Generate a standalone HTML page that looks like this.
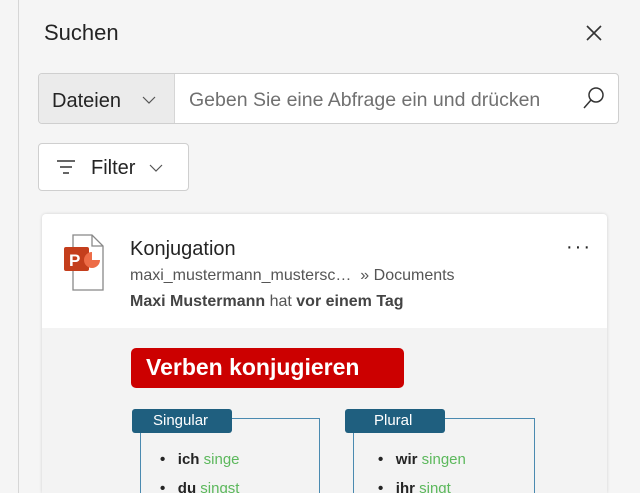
<!DOCTYPE html>
<html><head><style>
*{margin:0;padding:0;box-sizing:border-box}
html,body{width:640px;height:493px;overflow:hidden}
body{background:#f5f5f5;font-family:"Liberation Sans",sans-serif;position:relative;color:#242424}
.a{position:absolute}
</style></head><body>
<div class="a" style="left:18px;top:0;width:1px;height:493px;background:#d6d6d6"></div>
<div class="a" style="left:44px;top:20px;font-size:22px">Suchen</div>
<svg class="a" style="left:585px;top:24px" width="18" height="18"><path d="M2 2L16 16M16 2L2 16" stroke="#333" stroke-width="1.6"/></svg>
<div class="a" style="left:38px;top:73px;width:581px;height:51px;border:1px solid #cfcfcf;border-radius:4px;background:#fff;overflow:hidden">
 <div class="a" style="left:0;top:0;width:136px;height:49px;background:#ebebeb;border-right:1px solid #d6d6d6"></div>
 <div class="a" style="left:13px;top:16px;font-size:20px">Dateien</div>
 <svg class="a" style="left:103px;top:22px" width="14" height="9"><path d="M1 1L7 7L13 1" fill="none" stroke="#555" stroke-width="1.2"/></svg>
 <div class="a" style="left:150px;top:15px;font-size:19.5px;color:#707070">Geben Sie eine Abfrage ein und drücken</div>
 <svg class="a" style="left:543px;top:12px" width="24" height="24"><circle cx="14" cy="9" r="7" fill="none" stroke="#333" stroke-width="1.5"/><path d="M9 14L2 22" stroke="#333" stroke-width="1.5"/></svg>
</div>
<div class="a" style="left:38px;top:143px;width:151px;height:48px;border:1px solid #cfcfcf;border-radius:4px;background:#fff">
 <svg class="a" style="left:17px;top:15px" width="20" height="16"><path d="M1 2H19M4 8H16M7 14H13" stroke="#333" stroke-width="1.4"/></svg>
 <div class="a" style="left:52px;top:13px;font-size:20px">Filter</div>
 <svg class="a" style="left:110px;top:20px" width="14" height="9"><path d="M1 1L7 7L13 1" fill="none" stroke="#555" stroke-width="1.2"/></svg>
</div>
<div class="a" style="left:42px;top:214px;width:565px;height:279px;background:#f3f3f3;border-radius:4px 4px 0 0;box-shadow:0 0 3px rgba(0,0,0,.15);overflow:hidden">
 <div class="a" style="left:0;top:0;width:565px;height:114px;background:#fff"></div>
 <svg class="a" style="left:21px;top:20px" width="42" height="58"><path d="M10 1H29L40 12V56H10Z" fill="#fff" stroke="#888" stroke-width="1.3"/><path d="M29 1V12H40" fill="none" stroke="#888" stroke-width="1.3"/><rect x="1" y="13" width="25" height="24" rx="2" fill="#c43e1c"/><text x="6" y="32" font-family="Liberation Sans" font-weight="bold" font-size="17" fill="#fff">P</text><path d="M29 18a8 8 0 1 0 8 8h-8z" fill="#ed6c47"/></svg>
 <div class="a" style="left:88px;top:24px;font-size:20px">Konjugation</div>
 <div class="a" style="left:524px;top:22px;font-size:20px;letter-spacing:2px">···</div>
 <div class="a" style="left:88px;top:53px;font-size:16px;color:#555">maxi_mustermann_mustersc…&nbsp; » Documents</div>
 <div class="a" style="left:88px;top:79px;font-size:16px;color:#555"><b style="color:#444">Maxi Mustermann</b> hat <b style="color:#444">vor einem Tag</b></div>
 <div class="a" style="left:89px;top:134px;width:273px;height:40px;background:#c00;border-radius:5px;color:#fff;font-weight:bold;font-size:23px;padding:6px 0 0 15px">Verben konjugieren</div>
 <div class="a" style="left:98px;top:204px;width:180px;height:90px;border:1px solid #4a8ab0"></div>
 <div class="a" style="left:90px;top:195px;width:100px;height:24px;background:#1f5f7f;border-radius:3px;color:#fff;font-size:15px;padding:3px 0 0 21px">Singular</div>
 <div class="a" style="left:311px;top:204px;width:182px;height:90px;border:1px solid #4a8ab0"></div>
 <div class="a" style="left:303px;top:195px;width:100px;height:24px;background:#1f5f7f;border-radius:3px;color:#fff;font-size:15px;padding:3px 0 0 29px">Plural</div>
 <div class="a" style="left:118px;top:237px;font-size:15px"><b>•</b>&nbsp;&nbsp; <b>ich</b> <span style="color:#5cb85c">singe</span></div>
 <div class="a" style="left:118px;top:266px;font-size:15px"><b>•</b>&nbsp;&nbsp; <b>du</b> <span style="color:#5cb85c">singst</span></div>
 <div class="a" style="left:336px;top:237px;font-size:15px"><b>•</b>&nbsp;&nbsp; <b>wir</b> <span style="color:#5cb85c">singen</span></div>
 <div class="a" style="left:336px;top:266px;font-size:15px"><b>•</b>&nbsp;&nbsp; <b>ihr</b> <span style="color:#5cb85c">singt</span></div>
</div>
</body></html>
